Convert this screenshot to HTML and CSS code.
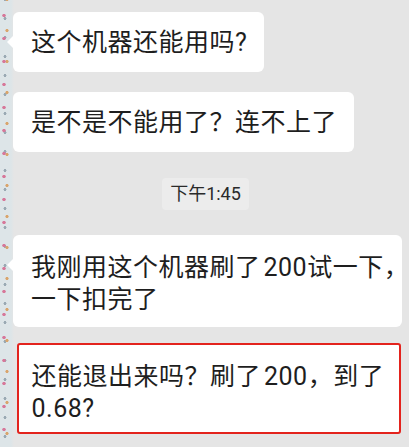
FILE: index.html
```html
<!DOCTYPE html>
<html lang="zh">
<head>
<meta charset="utf-8">
<link rel="stylesheet" href="styles.css">
</head>
<body>
<div class="chat">
  <div class="bubble tail">这个机器还能用吗?</div>
  <div class="bubble gap20">是不是不能用了？连不上了</div>
  <div class="time">下午1:45</div>
  <div class="bubble tail two w3">我刚用这个机器刷了<span class="num">200</span>试一下，<br>一下扣完了</div>
  <div class="bubble two marked">还能退出来吗？刷了<span class="num">200</span>，到了<br>0.68?</div>
</div>
</body>
</html>
```
FILE: styles.css
```css
html, body {
  margin: 0;
  padding: 0;
}
body {
  width: 409px;
  height: 447px;
  overflow: hidden;
  font-family: Roboto, "Noto Sans CJK SC", sans-serif;
  background:
    radial-gradient(circle, #d7789a 1.4px, transparent 2px) 0 4px / 8px 23px repeat-y,
    radial-gradient(circle, #d9a56d 1.3px, transparent 1.9px) 3px 15px / 8px 31px repeat-y,
    radial-gradient(circle, #9aa9b3 1.2px, transparent 1.8px) 1px 9px / 8px 19px repeat-y,
    linear-gradient(to right, #dde5e8 0, #dde5e8 11px, #e5e5e5 14px);
  background-color: #e5e5e5;
}
.chat {
  display: flex;
  flex-direction: column;
  align-items: flex-start;
  padding: 12px 7px 0 13px;
}
.bubble {
  position: relative;
  box-sizing: border-box;
  background: #ffffff;
  border-radius: 6px;
  padding: 16px 17px 14px 18px;
  font-size: 25px;
  letter-spacing: 0.5px;
  line-height: 30px;
  color: #1e1e1e;
  white-space: nowrap;
}
.num {
  margin-left: 3px;
}
.tail::before {
  content: "";
  position: absolute;
  left: -6px;
  top: 24px;
  border-top: 6px solid transparent;
  border-bottom: 6px solid transparent;
  border-right: 6px solid #ffffff;
}
.gap20 {
  margin-top: 20px;
}
.time {
  align-self: center;
  margin: 26px 4px 0 0;
  padding: 0 8px;
  height: 32px;
  line-height: 32px;
  font-size: 18px;
  color: #2a2a2a;
  background: #ececec;
  border-radius: 4px;
}
.two {
  margin-top: 25px;
  padding: 17px 0 11px 18px;
  line-height: 32px;
}
.w3 {
  width: 389px;
}
.marked {
  width: 384px;
  margin-top: 16px;
  margin-left: 4px;
  border: 2.5px solid #e3231d;
  border-radius: 3px;
  padding: 16px 0 7px 12.5px;
}
```
